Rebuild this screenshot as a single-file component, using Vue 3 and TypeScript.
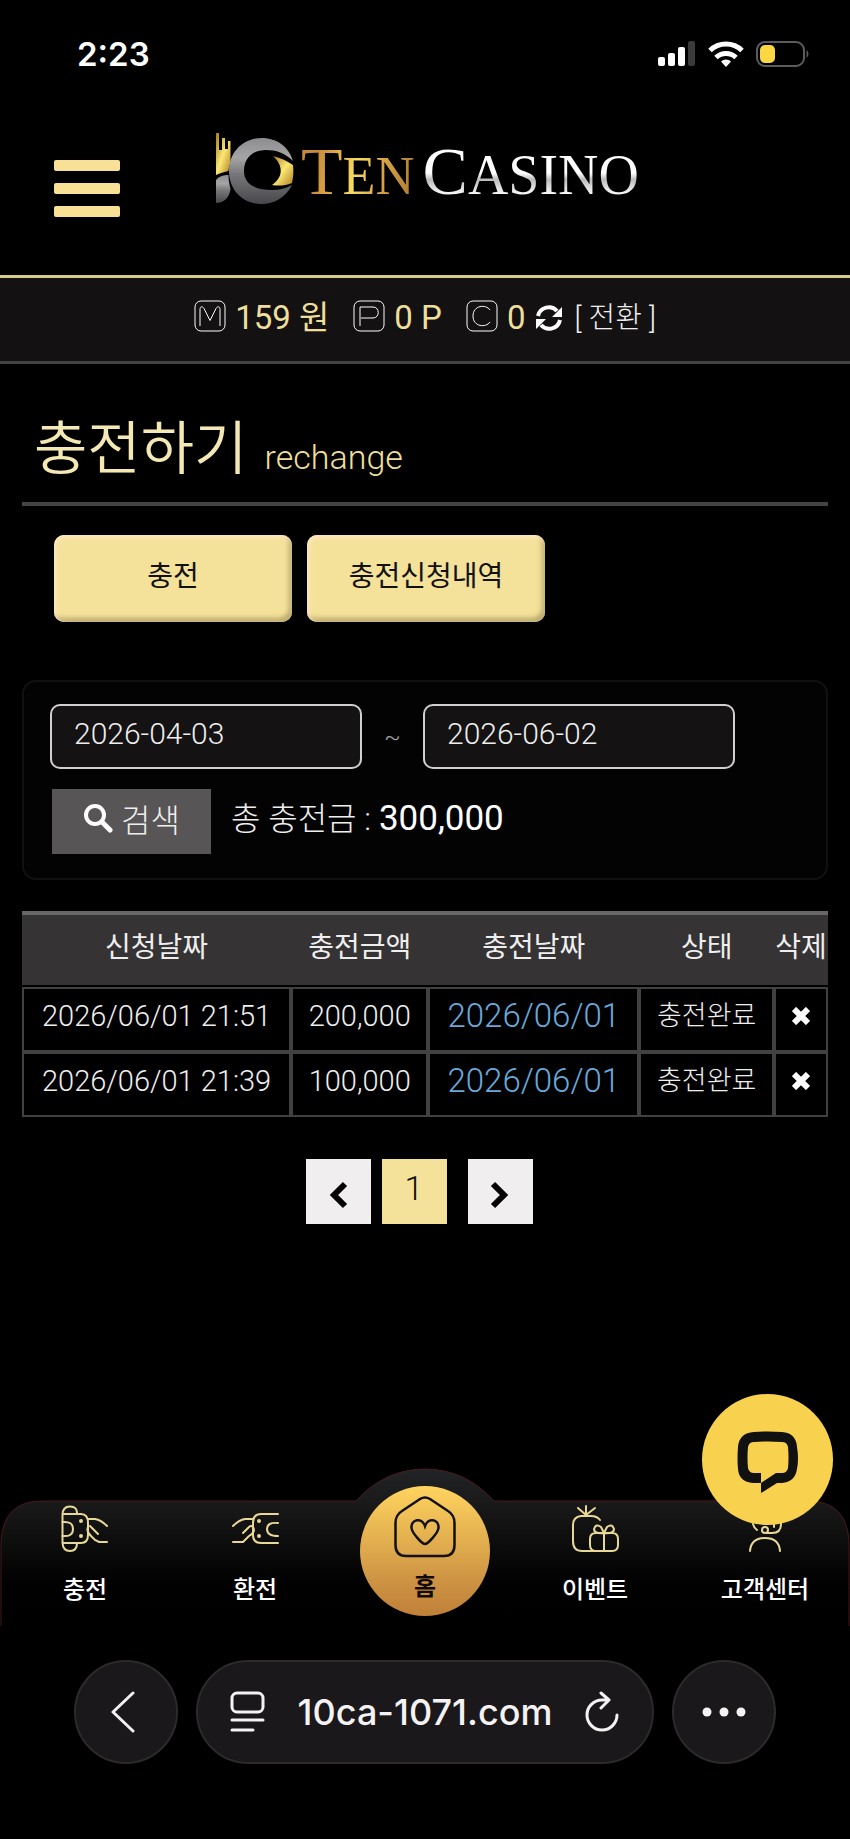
<script setup lang="ts">
import { ref } from 'vue'

interface Deposit {
  requested: string
  amount: string
  paid: string
  status: string
}

const dateFrom = ref('2026-04-03')
const dateTo = ref('2026-06-02')
const deposits = ref<Deposit[]>([
  { requested: '2026/06/01 21:51', amount: '200,000', paid: '2026/06/01', status: '충전완료' },
  { requested: '2026/06/01 21:39', amount: '100,000', paid: '2026/06/01', status: '충전완료' },
])

function removeDeposit(index: number) {
  deposits.value.splice(index, 1)
}
</script>

<template>
  <div class="screen">
    <div class="status">
      <span class="time">2:23</span>
      <div class="signals">
        <svg width="38" height="26" viewBox="0 0 38 26" fill="#fff">
          <rect x="0" y="16" width="7" height="9" rx="2" />
          <rect x="10" y="12" width="7" height="13" rx="2" />
          <rect x="20" y="6" width="7" height="19" rx="2" />
          <rect x="30" y="0" width="7" height="25" rx="2" fill="#3a3a3a" />
        </svg>
        <svg width="36" height="26" viewBox="0 0 36 26" fill="none" stroke="#fff" stroke-width="5">
          <path d="M2 9.5a23 23 0 0 1 32 0" />
          <path d="M8 16.500a14.500 14.500 0 0 1 20 0" />
          <path d="M18 26l-5-5.500a7.500 7.500 0 0 1 10 0z" fill="#fff" stroke="none" />
        </svg>
        <svg width="54" height="26" viewBox="0 0 54 26">
          <rect x="1" y="1" width="47" height="24" rx="8" fill="none" stroke="#5c5c5c" stroke-width="2" />
          <rect x="4" y="4" width="15" height="18" rx="5" fill="#fcd744" />
          <path d="M50.500 9a5 5 0 0 1 0 8z" fill="#5c5c5c" />
        </svg>
      </div>
    </div>

    <header class="top">
      <button class="menu" type="button" aria-label="메뉴"><i></i><i></i><i></i></button>
      <a class="logo" href="#">
        <svg width="79" height="74" viewBox="0 0 79 74">
          <defs>
            <linearGradient id="steel" x1="0" y1="0" x2="0" y2="1">
              <stop offset="0" stop-color="#8d8d90" />
              <stop offset=".3" stop-color="#a5a5a8" />
              <stop offset=".55" stop-color="#77777a" />
              <stop offset="1" stop-color="#48484c" />
            </linearGradient>
            <linearGradient id="gold" x1="0" y1="0" x2="1" y2="1">
              <stop offset="0" stop-color="#a8781c" />
              <stop offset=".5" stop-color="#fbe873" />
              <stop offset="1" stop-color="#b07f22" />
            </linearGradient>
          </defs>
          <path d="M0 0h3v17h3V5h3v11h3V8h2.500v22c-1 3-2 5-2 8C8 39 4 40 0 42z" fill="url(#gold)" />
          <path d="M0 70V47c3-4 8-5 12.500-5 0 6 1 10 2 14-1 8-6 14-14.500 14z" fill="url(#steel)" />
          <path d="M77 28C73 14 61 5 46 5 27 5 13 19 13 38s14 33 32 33c14 0 25-7 31-19-7 4-14 5-20 5-17 0-28-6-28-19 0-13 9-21 22-21 10 0 19 3 27 11z" fill="url(#steel)" />
          <path d="M57 23c8 2 14 5 20 9 1 7 0 13-1 18-7 3-14 3-20 2 12-8 11-20 1-29z" fill="url(#gold)" />
        </svg>
        <span class="ten"><b>T</b>EN</span>
        <span class="casino"><b>C</b>ASINO</span>
      </a>
    </header>

    <section class="account">
      <svg class="coin" viewBox="0 0 32 32"><rect x="1" y="1" width="30" height="30" rx="6" /><path d="M6 26V9.500C6 6 8.500 6 10 8.500l6 12 6-12c1.500-2.500 4-2.500 4 1V26" /></svg>
      <span class="sum">159 원</span>
      <svg class="coin" viewBox="0 0 32 32"><rect x="1" y="1" width="30" height="30" rx="6" /><path d="M7 26V7h13c7 0 7 11 0 11H8" /></svg>
      <span class="sum">0 P</span>
      <svg class="coin" viewBox="0 0 32 32"><rect x="1" y="1" width="30" height="30" rx="6" /><path d="M24 10c-4-6-17-5-17 6s13 12 17 6" /></svg>
      <span class="sum">0</span>
      <svg class="sync" width="28" height="28" viewBox="0 0 28 28" fill="none" stroke="#fff" stroke-width="4">
        <path d="M3 12a11 11 0 0 1 19-5M25 16a11 11 0 0 1-19 5" />
        <path d="M27 3v10H17zM1 25V15h10z" fill="#fff" stroke="none" />
      </svg>
      <a class="swap" href="#">[ 전환 ]</a>
    </section>

    <main class="content">
      <h1 class="title">충전하기 <small>rechange</small></h1>

      <div class="tabs">
        <button type="button">충전</button>
        <button type="button">충전신청내역</button>
      </div>

      <form class="filter" @submit.prevent>
        <div class="dates">
          <input v-model="dateFrom" type="text" aria-label="시작일" />
          <span>~</span>
          <input v-model="dateTo" type="text" aria-label="종료일" />
        </div>
        <div class="query">
          <button type="submit">
            <svg width="30" height="30" viewBox="0 0 30 30" fill="none" stroke="#fff" stroke-width="4"><circle cx="12" cy="12" r="9" /><path d="M19 19l8 8" stroke-width="5" stroke-linecap="round" /></svg>
            검색
          </button>
          <p>총 충전금 : <b>300,000</b></p>
        </div>
      </form>

      <table class="list">
        <colgroup><col class="c1" /><col class="c2" /><col class="c3" /><col class="c4" /><col class="c5" /></colgroup>
        <thead>
          <tr><th>신청날짜</th><th>충전금액</th><th>충전날짜</th><th>상태</th><th>삭제</th></tr>
        </thead>
        <tbody>
          <tr v-for="(row, i) in deposits" :key="row.requested">
            <td>{{ row.requested }}</td>
            <td>{{ row.amount }}</td>
            <td><a href="#">{{ row.paid }}</a></td>
            <td class="state">{{ row.status }}</td>
            <td>
              <button type="button" aria-label="삭제" @click="removeDeposit(i)">
                <svg width="18" height="18" viewBox="0 0 18 18" stroke="#fff" stroke-width="6"><path d="M2 2l14 14M16 2L2 16" /></svg>
              </button>
            </td>
          </tr>
        </tbody>
      </table>

      <nav class="pages" aria-label="페이지">
        <button type="button" aria-label="이전"><svg width="20" height="28" viewBox="0 0 20 28"><path d="M17 3L6 14l11 11" /></svg></button>
        <button type="button" class="current">1</button>
        <button type="button" class="next" aria-label="다음"><svg width="20" height="28" viewBox="0 0 20 28"><path d="M3 3l11 11L3 25" /></svg></button>
      </nav>
    </main>

    <footer class="dock">
      <svg class="hill" viewBox="0 0 850 158" preserveAspectRatio="none">
        <defs>
          <linearGradient id="fade" x1="0" y1="0" x2="0" y2="1">
            <stop offset="0" stop-color="#222425" />
            <stop offset=".22" stop-color="#19191a" />
            <stop offset=".72" stop-color="#020102" />
            <stop offset="1" stop-color="#000" />
          </linearGradient>
          <linearGradient id="rim" x1="0" y1="0" x2="0" y2="1">
            <stop offset="0" stop-color="#4a1a22" />
            <stop offset="1" stop-color="#3d1814" />
          </linearGradient>
        </defs>
        <path d="M1 158V74Q3 33 42 33H356Q385 1 425 1T494 33H808Q847 33 849 74V158" fill="url(#fade)" stroke="url(#rim)" />
      </svg>
      <nav class="links">
        <a href="#">
          <svg width="48" height="48" viewBox="0 0 48 48">
            <path d="M1.500 10Q1.500 1.500 9 1.500T16 9H20Q27 9 27 18V30Q27 38 20 38H16Q16 46 9 46T1.500 38zM1.500 9H16M1.500 38H16" />
            <path d="M1.500 17Q12 16 12 24T1.500 31M27 14H34Q40 15 46 21M27 22Q25 26 30 31L34 35 38 37H46M29 21L37 29" />
            <circle cx="20" cy="16" r="1" /><circle cx="20" cy="31" r="1" />
          </svg>
          <span>충전</span>
        </a>
        <a href="#">
          <svg width="48" height="48" viewBox="0 0 48 48">
            <path d="M47 9H30Q22 9 22 18V30Q22 38 30 38H47M47 18Q36 17 36 24T47 31" />
            <path d="M22 14H14Q8 15 2 21M2 37H12L18 31Q25 27 22 22 20 20 18 22L12 28" />
            <circle cx="28" cy="16" r="1" /><circle cx="28" cy="31" r="1" />
          </svg>
          <span>환전</span>
        </a>
        <a href="#" class="home">
          <svg width="62" height="62" viewBox="0 0 62 62">
            <path d="M1.500 27Q1.500 19 8 15L26 3Q31 0 36 3L54 15Q60.500 19 60.500 27V49Q60.500 60 50 60H12Q1.500 60 1.500 49z" />
            <path d="M31 48C28 48 18 37 17.500 32 17 23 28 21 31 30 34 21 45 23 44.500 32 44 37 34 48 31 48z" />
          </svg>
          <span>홈</span>
        </a>
        <a href="#">
          <svg width="48" height="48" viewBox="0 0 48 48">
            <path d="M15 1V9M7 3L15 10 24 3M10 11H20Q26 11 29 15M10 11Q2 12 2 20V36Q2 46 11 46H39" />
            <path d="M19 34Q19 28 25 28H41Q47 28 47 34V40Q47 46 41 46H25Q19 46 19 40zM33 28V46M33 28Q23 29 23 24 25 18 30 22L33 28Q43 29 43 24 41 18 36 22z" />
          </svg>
          <span>이벤트</span>
        </a>
        <a href="#">
          <svg width="48" height="48" viewBox="0 0 48 48">
            <path d="M12 19Q13 23 16 25M33 19V22M40 17V19Q40 28 31 28H26M9 46Q10 33 24 33T39 46" />
            <circle cx="24" cy="25" r="3" />
          </svg>
          <span>고객센터</span>
        </a>
      </nav>
      <button class="chat" type="button" aria-label="상담">
        <svg width="62" height="62" viewBox="0 0 62 62">
          <path fill-rule="evenodd" d="M17 1Q31 0 45 1 59 2 60 16 62 28 60 38 58 51 45 52H40L24 62V52H16Q2 51 1 38 0 28 1 16 2 2 17 1zM24 42V52L39 42H45Q50 42 51 37 52 26 51 16 50 11 45 11 31 10 17 11 12 11 11 16 10 26 11 37 12 42 17 42z" fill="#111" />
        </svg>
      </button>
    </footer>

    <div class="browser">
      <button class="round back" type="button" aria-label="뒤로">
        <svg width="24" height="42" viewBox="0 0 24 42"><path d="M22 2L2 21l20 19" /></svg>
      </button>
      <div class="address">
        <svg width="36" height="42" viewBox="0 0 36 42"><rect x="2" y="2" width="31" height="19" rx="5" /><path d="M2 29H33M2 39H23" /></svg>
        <span>10ca-1071.com</span>
        <svg width="36" height="42" viewBox="0 0 36 42"><path d="M18 9A15 15 0 1 0 33 24M18 9H24M17 2L25 9 17 17" /></svg>
      </div>
      <button class="round" type="button" aria-label="더보기">
        <svg width="44" height="10" viewBox="0 0 44 10"><g fill="#f4f2f3" stroke="none"><circle cx="5" cy="5" r="4.500" /><circle cx="22" cy="5" r="4.500" /><circle cx="39" cy="5" r="4.500" /></g></svg>
      </button>
    </div>
  </div>
</template>

<style>
body { margin: 0; background: #000; }
</style>

<style scoped>
* { box-sizing: border-box; }
.screen {
  min-height: 100vh;
  display: flex;
  flex-direction: column;
  background: #000;
  color: #eee;
  font-family: Roboto, "Noto Sans CJK KR", sans-serif;
  font-weight: 300;
  font-size: 28px;
}
button, input { font: inherit; color: inherit; border: 0; margin: 0; padding: 0; }
a { color: inherit; text-decoration: none; }
svg { flex: none; }

.status {
  height: 108px;
  padding: 0 40px 0 77px;
  display: flex;
  align-items: center;
  justify-content: space-between;
}
.time { font: 600 33px Inter, sans-serif; color: #fff; }
.signals { display: flex; gap: 12px; }

.top {
  height: 170px;
  padding: 25px 54px 0;
  display: grid;
  grid-template-columns: 66px auto 66px;
  justify-content: space-between;
  align-items: start;
  border-bottom: 3px solid #d8c98c;
}
.menu { background: none; display: grid; gap: 12px; padding-top: 27px; }
.menu i { height: 11px; background: #f8e197; border-radius: 2px; }
.logo {
  display: flex;
  align-items: flex-start;
  padding-left: 5px;
  font: 56px/76px "Liberation Serif", serif;
}
.logo b { font-size: 68px; font-weight: 400; }
.ten, .casino { color: transparent; background-clip: text; -webkit-background-clip: text; }
.ten { margin-left: 6px; font-size: 54px; background-image: linear-gradient(100deg, #c58a3c 15%, #e0a848 30%, #f7dc62 48%, #d9a548 68%, #a8742e); }
.casino { margin-left: 8px; background-image: linear-gradient(#fff 50%, #bbb 58%, #fff 78%); }

.account {
  height: 86px;
  display: flex;
  justify-content: center;
  padding-top: 22px;
  background: #131112;
  border-bottom: 3px solid #434343;
  line-height: 36px;
}
.coin { width: 32px; height: 32px; fill: none; stroke: #fff; stroke-width: 1; }
.sum { margin: 0 24px 0 9px; font-size: 33px; font-weight: 400; color: #eedf9a; }
.sync { margin: 4px 0 0 -14px; }
.swap { margin-left: 11px; font-size: 29px; }

.content { padding: 0 22px; flex: 1; }
.title {
  margin: 0;
  height: 142px;
  padding: 47px 0 0 12px;
  border-bottom: 4px solid #444;
  font-size: 58px;
  line-height: 76px;
  font-weight: 350;
  color: #f4e8b4;
}
.title small { margin-left: 3px; font-size: 34px; color: #eedf9a; }
.tabs { display: flex; gap: 15px; padding: 29px 32px 58px; }
.tabs button {
  width: 238px;
  height: 87px;
  padding-bottom: 10px;
  border-radius: 10px;
  background: #f4e19a;
  color: #111;
  font-weight: 400;
  box-shadow: inset 2px 2px 5px #ffe9c4, inset -3px -4px 5px #b9a86c;
}
.filter {
  height: 200px;
  padding: 22px 26px;
  border: 2px solid #121112;
  border-radius: 14px;
  background: #040304;
}
.dates { display: flex; align-items: center; }
.dates input {
  width: 312px;
  height: 65px;
  padding: 0 22px 7px;
  border: 2px solid #d0d0d0;
  border-radius: 10px;
  background: #141213;
  font-size: 30px;
}
.dates span { width: 61px; text-align: center; font-size: 24px; color: #aaa; }
.query { display: flex; align-items: center; gap: 20px; margin: 20px 0 0 2px; }
.query button {
  width: 159px;
  height: 65px;
  padding-bottom: 8px;
  display: flex;
  align-items: center;
  justify-content: center;
  gap: 8px;
  background: #585556;
  font-size: 32px;
}
.query p { margin: 0 0 6px; font-size: 32px; line-height: 44px; }
.query b { font-size: 35px; font-weight: 400; color: #fff; }

.list {
  width: 100%;
  margin-top: 31px;
  table-layout: fixed;
  border-collapse: separate;
  border-spacing: 0;
}
.c1 { width: 33.4%; }
.c2 { width: 17%; }
.c3 { width: 26.2%; }
.c4 { width: 16.7%; }
.c5 { width: 6.7%; }
.list th {
  height: 76px;
  padding: 0 0 10px;
  border-top: 4px solid #666;
  border-bottom: 2px solid #000;
  background: #353334;
  font-weight: 400;
  white-space: nowrap;
}
.list td {
  height: 65px;
  padding: 0 0 7px;
  border: 2px solid #424142;
  text-align: center;
  font-size: 29px;
  line-height: 40px;
}
.list .state { font-size: 27px; }
.list td a { font-size: 33px; color: #68a9dc; }
.list td button { display: block; margin: 0 auto; background: none; }
.list td svg { display: block; }

.pages { display: flex; justify-content: center; gap: 11px; padding: 42px 12px 0 0; }
.pages button { width: 65px; height: 65px; background: #f0eeef; color: #111; display: grid; place-items: center; }
.pages .current { background: #f4e19a; padding-bottom: 8px; font-size: 34px; }
.pages .next { margin-left: 10px; }
.pages svg { margin-top: 6px; fill: none; stroke: #050505; stroke-width: 6; }

.dock { position: relative; height: 158px; }
.hill { position: absolute; inset: 0; width: 100%; height: 100%; }
.links { position: relative; display: grid; grid-template-columns: repeat(5, 1fr); align-items: start; }
.links a {
  display: flex;
  flex-direction: column;
  align-items: center;
  gap: 18px;
  padding-top: 37px;
  font: 500 24px/34px "Noto Sans CJK KR", sans-serif;
  color: #fff;
}
.links svg { fill: none; stroke: #e8d898; stroke-width: 2; stroke-linecap: round; }
.links .home {
  width: 130px;
  height: 130px;
  justify-self: center;
  margin-top: 18px;
  padding-top: 10px;
  gap: 10px;
  border-radius: 50%;
  background: linear-gradient(#ffd45f, #cc9142 75%, #c08038);
  color: #120a04;
  font-weight: 700;
}
.links .home svg { stroke: #111; stroke-width: 2.5; }
.chat {
  position: absolute;
  right: 17px;
  top: -74px;
  width: 131px;
  height: 131px;
  border-radius: 50%;
  background: #f8d24e;
  display: grid;
  place-items: center;
}
.chat svg { margin-top: 4px; }

.browser { height: 213px; display: flex; align-items: flex-start; gap: 18px; padding: 34px 74px 0; }
.browser svg { fill: none; stroke: #f4f2f3; stroke-width: 3; stroke-linecap: round; stroke-linejoin: round; }
.round, .address {
  height: 104px;
  border: 2px solid #2c2a2b;
  border-radius: 52px;
  background: #1a181a;
  display: flex;
  align-items: center;
}
.round { width: 104px; justify-content: center; }
.back { padding-right: 6px; }
.address { flex: 1; justify-content: space-between; padding: 0 32px; }
.address span { font: 500 36px Inter, sans-serif; color: #f4f2f3; }
</style>
